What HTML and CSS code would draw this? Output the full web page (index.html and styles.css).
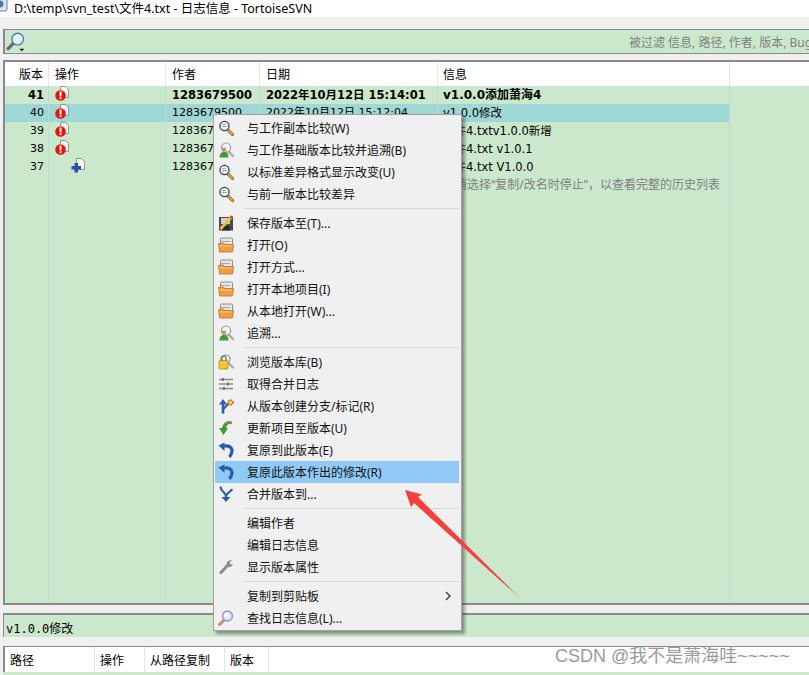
FILE: index.html
```html
<!DOCTYPE html>
<html lang="zh">
<head>
<meta charset="utf-8">
<title>日志信息 - TortoiseSVN</title>
<link rel="stylesheet" href="styles.css">
</head>
<body>
<svg class="defs" width="0" height="0" aria-hidden="true">
  <symbol id="i-mag" viewBox="0 0 16 16">
    <path d="M9.500 9.500l5 5" stroke="#6b5a1e" stroke-width="3" stroke-linecap="round"/>
    <path d="M9.800 9.800l4.600 4.600" stroke="#e8b33a" stroke-width="1.500" stroke-linecap="round"/>
    <circle cx="6.500" cy="6" r="4.600" fill="#e8f1f6" stroke="#3c4650" stroke-width="1.300"/>
    <path d="M4 6.500h5M4.500 4.500h3" stroke="#8fa9bb" stroke-width="1"/>
  </symbol>
  <symbol id="i-blame" viewBox="0 0 16 16">
    <path d="M10 9l5 5" stroke="#a9a9a9" stroke-width="2.400" stroke-linecap="round"/>
    <circle cx="8" cy="5.600" r="4.600" fill="#f5f5f5" stroke="#9a9a9a" stroke-width="1.200"/>
    <circle cx="6" cy="7.500" r="2.300" fill="#c99a78"/>
    <path d="M1.500 15.500c0-4 2-5.500 4.500-5.500s4.500 1.500 4.500 5.500z" fill="#3f9a3a"/>
  </symbol>
  <symbol id="i-save" viewBox="0 0 16 16">
    <rect x="1" y="2" width="14" height="13.500" fill="#4a4a4a"/>
    <rect x="3" y="3" width="9" height="6" fill="#cfcfcf"/>
    <rect x="4" y="11" width="8" height="4.500" fill="#2c2c2c"/>
    <path d="M2.500 14L13 2.500" stroke="#e9c23a" stroke-width="2.600"/>
    <path d="M12.500 3l1.600-2" stroke="#d9342b" stroke-width="2.400"/>
  </symbol>
  <symbol id="i-folder" viewBox="0 0 16 16">
    <rect x="2.500" y="1" width="12" height="7" rx="1" fill="#e6e6e6" stroke="#8e8e8e"/>
    <path d="M3 4.500h9" stroke="#a9a9a9"/>
    <path d="M.5 6.500l5-.5 1 1.500h9l-1 7.500H1.500z" fill="#ef9d3f" stroke="#b9762c" stroke-width=".8"/>
    <path d="M1.500 9h13" stroke="#f9c987"/>
  </symbol>
  <symbol id="i-repo" viewBox="0 0 16 16">
    <path d="M10 8.500l5 5" stroke="#a9a9a9" stroke-width="2.200" stroke-linecap="round"/>
    <circle cx="8" cy="5" r="4" fill="#f3f3f3" stroke="#8f8f8f" stroke-width="1.200"/>
    <rect x="1" y="6.500" width="9" height="8.500" rx="1" fill="#f0c92f" stroke="#a98b1c" stroke-width=".8"/>
    <path d="M3 6.500V4.500a2.500 2.500 0 0 1 5 0v2" fill="none" stroke="#6f6f6f" stroke-width="1.200"/>
  </symbol>
  <symbol id="i-lines" viewBox="0 0 16 16">
    <path d="M1 3.500h14M1 8h14M1 12.500h14" stroke="#8b8b8b" stroke-width="1.500"/>
    <path d="M5 2v3M10 6.500v3M6 11v3" stroke="#5d5d5d" stroke-width="1.500"/>
  </symbol>
  <symbol id="i-branch" viewBox="0 0 16 16">
    <path d="M5 15.500V4" stroke="#2f5ea8" stroke-width="2.600"/>
    <path d="M1 6.500L5 1l4 5.500z" fill="#2f5ea8"/>
    <path d="M5.500 11L11 5" stroke="#2f5ea8" stroke-width="2"/>
    <circle cx="12.500" cy="4.500" r="2.500" fill="#f5d04a" stroke="#e2502b" stroke-width="1.400" stroke-dasharray="1.500 .8"/>
  </symbol>
  <symbol id="i-update" viewBox="0 0 16 16">
    <path d="M14 3c-4.500-1.500-8 .5-8.500 5" fill="none" stroke="#8a8a5a" stroke-width="2.800"/>
    <path d="M5.500 15L1 8h3.200c.6-3.500 4.500-6 9.800-4.500-3.800-.2-5.500 1.500-5.800 4.500H10z" fill="#3e9a34"/>
  </symbol>
  <symbol id="i-revert" viewBox="0 0 16 16">
    <path d="M6 4.200c4-1 7.500.5 8 4 .2 2.500-1 5-2.500 6.800" fill="none" stroke="#2759ae" stroke-width="3.200"/>
    <path d="M6.500 .5v8.500L.5 3.500z" fill="#2759ae"/>
  </symbol>
  <symbol id="i-merge" viewBox="0 0 16 16">
    <path d="M2.500 .5c0 5.500 5.500 5 5.500 10.500M14 3c-1 4-6 3-6 8" fill="none" stroke="#2f5ea8" stroke-width="2.200"/>
    <path d="M3.500 11h9L8 16z" fill="#2f5ea8"/>
  </symbol>
  <symbol id="i-wrench" viewBox="0 0 16 16">
    <path d="M3 13.500L10 6" stroke="#8d8d8d" stroke-width="3.200" stroke-linecap="round"/>
    <path d="M8.500 5.500A4 4 0 0 1 14 1.500l-2.500 2 1 2 2.500-.5a4 4 0 0 1-5 3z" fill="#8d8d8d"/>
  </symbol>
  <symbol id="i-find" viewBox="0 0 16 16">
    <path d="M1.500 14.500L6 10" stroke="#c98a78" stroke-width="3" stroke-linecap="round"/>
    <circle cx="9.500" cy="6" r="5" fill="#dfe6f7" stroke="#8d97c8" stroke-width="1.400"/>
    <circle cx="8.500" cy="5" r="2" fill="#fff"/>
  </symbol>
  <symbol id="i-filter" viewBox="0 0 24 24">
    <path d="M2.500 20L9 13.500" stroke="#6b6b6b" stroke-width="4" stroke-linecap="round"/>
    <circle cx="14" cy="8.500" r="7" fill="#dff1fb" stroke="#4a7fa8" stroke-width="1.600"/>
    <path d="M11 7c1-2 3-3 5-2.500" stroke="#fff" stroke-width="1.800" fill="none"/>
    <path d="M16 20h6l-3 3z" fill="#111"/>
  </symbol>
  <symbol id="i-mod" viewBox="0 0 14 15">
    <path d="M5.500 .5h5l3 3v8h-8z" fill="#f4f4f4" stroke="#8c8c8c" stroke-width=".9"/>
    <circle cx="5.500" cy="9.500" r="5.300" fill="#e8140c"/>
    <rect x="4.600" y="5.500" width="1.900" height="5" fill="#fff"/>
    <rect x="4.600" y="11.300" width="1.900" height="1.800" fill="#fff"/>
  </symbol>
  <symbol id="i-add" viewBox="0 0 14 15">
    <path d="M5.500 .5h5l3 3v8h-8z" fill="#f4f4f4" stroke="#8c8c8c" stroke-width=".9"/>
    <path d="M3.500 5h3.500v3h3v3.500h-3v3H3.500v-3H.5V8h3z" fill="#2a4fae"/>
  </symbol>
  <symbol id="i-app" viewBox="0 0 16 16">
    <rect x="1" y="1" width="14" height="14" rx="2" fill="#dfe5ee" stroke="#6e7d92"/>
    <circle cx="8" cy="8" r="3.500" fill="#4d78b4"/>
  </symbol>
</svg>

<div class="window">
  <header class="titlebar">
    <svg class="app-icon"><use href="#i-app"/></svg>
    <span>D:\temp\svn_test\文件4.txt - 日志信息 - TortoiseSVN</span>
  </header>

  <div class="filter">
    <svg class="filter-icon"><use href="#i-filter"/></svg>
    <span class="filter-hint">被过滤 信息, 路径, 作者, 版本, Bug-ID</span>
  </div>

  <section class="loglist">
    <div class="row head">
      <div class="cell num">版本</div><div class="cell">操作</div><div class="cell">作者</div><div class="cell">日期</div><div class="cell msg">信息</div><div class="cell last"></div>
    </div>
    <div class="row bold">
      <div class="cell num">41</div><div class="cell"><svg class="act"><use href="#i-mod"/></svg></div><div class="cell">1283679500</div><div class="cell">2022年10月12日 15:14:01</div><div class="cell msg">v1.0.0添加萧海4</div><div class="cell last"></div>
    </div>
    <div class="row selected">
      <div class="cell num">40</div><div class="cell"><svg class="act"><use href="#i-mod"/></svg></div><div class="cell">1283679500</div><div class="cell">2022年10月12日 15:12:04</div><div class="cell msg">v1.0.0修改</div><div class="cell last"></div>
    </div>
    <div class="row">
      <div class="cell num">39</div><div class="cell"><svg class="act"><use href="#i-mod"/></svg></div><div class="cell">1283679500</div><div class="cell">2022年10月12日 15:10:11</div><div class="cell msg">文件4.txtv1.0.0新增</div><div class="cell last"></div>
    </div>
    <div class="row">
      <div class="cell num">38</div><div class="cell"><svg class="act"><use href="#i-mod"/></svg></div><div class="cell">1283679500</div><div class="cell">2022年10月12日 15:08:32</div><div class="cell msg">文件4.txt v1.0.1</div><div class="cell last"></div>
    </div>
    <div class="row">
      <div class="cell num">37</div><div class="cell"><svg class="act add"><use href="#i-add"/></svg></div><div class="cell">1283679500</div><div class="cell">2022年10月12日 15:05:20</div><div class="cell msg">文件4.txt V1.0.0</div><div class="cell last"></div>
    </div>
    <div class="row note">
      <div class="cell num"></div><div class="cell"></div><div class="cell"></div><div class="cell"></div><div class="cell msg">取消选择“复制/改名时停止”，以查看完整的历史列表</div><div class="cell last"></div>
    </div>
    <div class="row filler">
      <div class="cell"></div><div class="cell"></div><div class="cell"></div><div class="cell"></div><div class="cell"></div><div class="cell last"></div>
    </div>
  </section>

  <div class="message">v1.0.0修改</div>

  <section class="paths">
    <div class="paths-head">
      <div class="pcell">路径</div><div class="pcell">操作</div><div class="pcell">从路径复制</div><div class="pcell">版本</div><div class="pcell last"></div>
    </div>
    <div class="paths-body"></div>
  </section>
</div>

<nav class="menu">
  <div class="item"><svg class="ico"><use href="#i-mag"/></svg><span>与工作副本比较(W)</span></div>
  <div class="item"><svg class="ico"><use href="#i-blame"/></svg><span>与工作基础版本比较并追溯(B)</span></div>
  <div class="item"><svg class="ico"><use href="#i-mag"/></svg><span>以标准差异格式显示改变(U)</span></div>
  <div class="item"><svg class="ico"><use href="#i-mag"/></svg><span>与前一版本比较差异</span></div>
  <hr class="sep">
  <div class="item"><svg class="ico"><use href="#i-save"/></svg><span>保存版本至(T)...</span></div>
  <div class="item"><svg class="ico"><use href="#i-folder"/></svg><span>打开(O)</span></div>
  <div class="item"><svg class="ico"><use href="#i-folder"/></svg><span>打开方式...</span></div>
  <div class="item"><svg class="ico"><use href="#i-folder"/></svg><span>打开本地项目(I)</span></div>
  <div class="item"><svg class="ico"><use href="#i-folder"/></svg><span>从本地打开(W)...</span></div>
  <div class="item"><svg class="ico"><use href="#i-blame"/></svg><span>追溯...</span></div>
  <hr class="sep">
  <div class="item"><svg class="ico"><use href="#i-repo"/></svg><span>浏览版本库(B)</span></div>
  <div class="item"><svg class="ico"><use href="#i-lines"/></svg><span>取得合并日志</span></div>
  <div class="item"><svg class="ico"><use href="#i-branch"/></svg><span>从版本创建分支/标记(R)</span></div>
  <div class="item"><svg class="ico"><use href="#i-update"/></svg><span>更新项目至版本(U)</span></div>
  <div class="item"><svg class="ico"><use href="#i-revert"/></svg><span>复原到此版本(E)</span></div>
  <div class="item active"><svg class="ico"><use href="#i-revert"/></svg><span>复原此版本作出的修改(R)</span></div>
  <div class="item"><svg class="ico"><use href="#i-merge"/></svg><span>合并版本到...</span></div>
  <hr class="sep">
  <div class="item"><span class="ico"></span><span>编辑作者</span></div>
  <div class="item"><span class="ico"></span><span>编辑日志信息</span></div>
  <div class="item"><svg class="ico"><use href="#i-wrench"/></svg><span>显示版本属性</span></div>
  <hr class="sep">
  <div class="item"><span class="ico"></span><span>复制到剪贴板</span><svg class="chev" viewBox="0 0 6 10"><path d="M1 1l4 4-4 4" fill="none" stroke="#333" stroke-width="1.300"/></svg></div>
  <div class="item"><svg class="ico"><use href="#i-find"/></svg><span>查找日志信息(L)...</span></div>
</nav>

<svg class="arrow" viewBox="0 0 130 125" aria-hidden="true">
  <path d="M5 8L22 12.500 18 15 121 117 14 21 11 25z" fill="#f4403c"/>
</svg>

<div class="watermark">CSDN @我不是萧海哇~~~~~</div>
</body>
</html>
```

FILE: styles.css
```css
* { box-sizing: border-box; }
html, body { margin: 0; padding: 0; }
body {
  width: 809px;
  height: 675px;
  overflow: hidden;
  position: relative;
  background: #f0f0f0;
  color: #000;
  font: 12px "Noto Sans", "Noto Sans CJK SC", sans-serif;
}
.defs { position: absolute; }
.window { display: flex; flex-direction: column; height: 675px; }

.titlebar {
  height: 17px;
  flex: none;
  background: #fff;
  display: flex;
  align-items: center;
  overflow: hidden;
  white-space: nowrap;
  line-height: 14px;
  font-size: 12.5px;
}
.app-icon { width: 16px; height: 16px; margin: -10px 6px 0 -8px; flex: none; }

.filter {
  flex: none;
  margin: 12px 0 0 3px;
  height: 25px;
  border: 1px solid #8a8a8a;
  border-right: 0;
  border-left-width: 2px;
  background: #cbe8cc;
  display: flex;
  align-items: center;
  overflow: hidden;
  white-space: nowrap;
}
.filter-icon { width: 20px; height: 20px; flex: none; margin-left: 1px; }
.filter-hint { color: #808080; margin-left: 603px; }

.loglist {
  flex: 1;
  min-height: 0;
  margin: 6px 0 0 3px;
  border-top: 2px solid #8a8a8a;
  border-left: 2px solid #8a8a8a;
  border-bottom: 2px solid #8a8a8a;
  background: #cbe8cc;
  display: flex;
  flex-direction: column;
  font-family: "DejaVu Sans", "Noto Sans CJK SC", sans-serif;
  font-size: 11px;
}
.row {
  display: grid;
  grid-template-columns: 44px 117px 94px 178px 292px 1fr;
  height: 18px;
  flex: none;
  line-height: 18px;
  white-space: nowrap;
}
.cell {
  padding: 0 6px;
  border-right: 1px solid #b9dfd3;
  overflow: hidden;
}
.cell.msg { padding-left: 5px; font-size: 11.5px; }
.cell.last { border-right: 0; }
.cell.num { text-align: right; padding: 0 4px 0 0; }
.head {
  height: 24px;
  line-height: 24px;
  background: #fff;
  font-family: "Noto Sans CJK SC", sans-serif;
  font-size: 12px;
}
.head .cell { border-right-color: #e5e5e5; }
.head .cell.msg { font-size: 12px; }
.head .num { padding-right: 5px; }
.bold { font-weight: 700; font-size: 11.5px; }
.bold .cell.msg { font-size: 12px; }
.selected { background: #9fd6d6; }
.selected .cell.last { background: #cbe8cc; }
.note .cell { color: #808080; font-family: "Noto Sans", "Noto Sans CJK SC", sans-serif; font-size: 12px; overflow: visible; }
.note .cell.msg { font-size: 12px; }
.row.filler { flex: 1; height: auto; }
.act { width: 14px; height: 15px; display: block; }
.act.add { margin-left: 16px; }

.message {
  flex: none;
  margin: 8px 0 0 3px;
  height: 24px;
  border-top: 2px solid #8a8a8a;
  border-left: 1px solid #8a8a8a;
  background: #cbe8cc;
  padding: 6px 0 0 2px;
  font: 12px/16px "DejaVu Sans Mono", "Noto Sans CJK SC", monospace;
}
.paths {
  flex: none;
  margin: 1px 0 0 3px;
  height: 37px;
  padding-top: 8px;
  background: linear-gradient(#f5f5f5 0, #f0f0f0 2px);
  overflow: hidden;
}
.paths-head {
  display: grid;
  grid-template-columns: 90px 50px 80px 44px 1fr;
  height: 26px;
  line-height: 26px;
  border-top: 1px solid #8a8a8a;
  border-left: 2px solid #8a8a8a;
  background: #fff;
  font-family: "Noto Sans CJK SC", sans-serif;
}
.pcell { padding: 0 5px; border-right: 1px solid #e5e5e5; white-space: nowrap; }
.pcell.last { border-right: 0; }
.paths-body { height: 3px; background: #cbe8cc; }

.menu {
  position: absolute;
  left: 213px;
  top: 114px;
  width: 249px;
  padding: 2px 2px 1px 1px;
  background: #f0f0f0;
  border: 1px solid #a0a0a0;
  box-shadow: 3px 3px 3px rgba(60, 60, 60, .5);
  font-family: "Noto Sans", "Noto Sans CJK SC", sans-serif;
  font-size: 12px;
  color: #111;
}
.item {
  display: flex;
  align-items: center;
  height: 22px;
  padding-left: 3px;
  white-space: nowrap;
  position: relative;
}
.item.active { background: #91c9f7; }
.ico { width: 16px; height: 16px; margin-right: 13px; flex: none; display: block; }
.chev { width: 6px; height: 10px; position: absolute; left: 230px; top: 6px; }
.sep { height: 1px; border: 0; background: #d7d7d7; margin: 3px 0 3px 28px; }

.arrow {
  position: absolute;
  left: 400px;
  top: 482px;
  width: 130px;
  height: 125px;
}
.watermark {
  position: absolute;
  left: 555px;
  top: 645px;
  font: 18px/22px "Liberation Sans", "Noto Sans CJK SC", sans-serif;
  color: #9a9a9a;
  white-space: nowrap;
}
```
